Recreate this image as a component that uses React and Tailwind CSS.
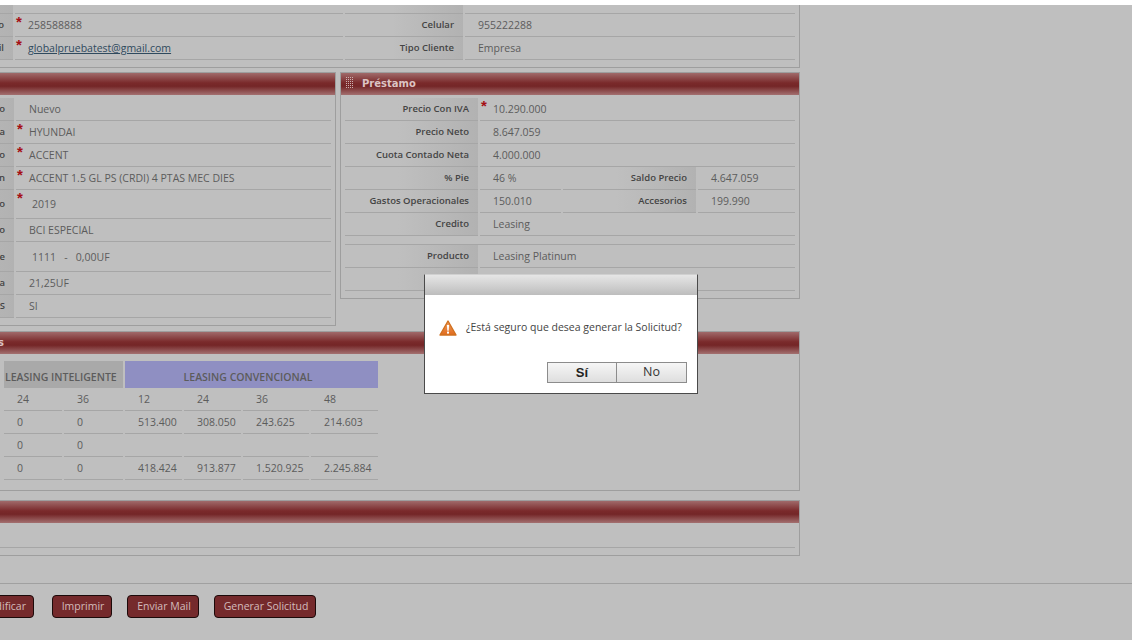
import React from "react";

const LINE = "border-b border-[#a6a6a6]";

function DotGrid() {
  const dots = [];
  for (let y = 0; y < 6; y++) for (let x = 0; x < 4; x++) dots.push([x, y]);
  return (
    <svg width="8" height="12" viewBox="0 0 8 12" className="mr-[8px] shrink-0">
      {dots.map(([x, y]) => (
        <rect key={`${x}-${y}`} x={x * 2} y={y * 2} width="1" height="1" fill="#cdb0b0" />
      ))}
    </svg>
  );
}

function Header({ title, lead }) {
  return (
    <div className="flex h-[22px] items-center bg-[linear-gradient(to_bottom,#a06a6a_0%,#7a2a2b_45%,#742627_60%,#a37070_100%)] pb-[2px] pl-[5px]">
      {title && <DotGrid />}
      {title && <span className="font-['DejaVu_Sans',sans-serif] text-[10px] font-bold text-[#dcc4c4]">{title}</span>}
      {lead && <span className="w-[149px] text-right font-['DejaVu_Sans',sans-serif] text-[10px] font-bold text-[#dcc4c4]">{lead}</span>}
    </div>
  );
}

function Label({ children, className = "" }) {
  return (
    <div className={`flex items-center justify-end bg-[linear-gradient(to_right,#bfbfbf_40%,#b2b2b2)] pr-[9px] pt-[1px] font-['Open_Sans',sans-serif] text-[9.5px] font-semibold text-[#444444] ${LINE} ${className}`}>
      {children}
    </div>
  );
}

function Value({ children, req, pad = 13, link, className = "" }) {
  return (
    <div className={`relative flex items-center pt-[2px] font-['Open_Sans',sans-serif] text-[10.5px] text-[#5c5c5c] ${LINE} ${className}`}>
      {req && <span className="absolute left-[1px] top-0 font-['Liberation_Sans',sans-serif] text-[15px] font-bold leading-[15px] text-[#a50f14]">*</span>}
      <span className={`whitespace-pre ${pad === 13 ? "pl-[13px]" : "pl-[16px]"}`}>
        {link ? <span className="text-[#2f4a5e] underline">{children}</span> : children}
      </span>
    </div>
  );
}

function LeftRow({ label, value, req, h = "h-[23px]", pad }) {
  return (
    <div className={`grid ${h} grid-cols-[164px_1fr] gap-x-[2px]`}>
      <Label>{label}</Label>
      <Value req={req} pad={pad}>{value}</Value>
    </div>
  );
}

function RightRow({ label, value, req, label2, value2, h = "h-[23px]" }) {
  if (label2) {
    return (
      <div className={`grid ${h} grid-cols-[133px_81px_133px_1fr] gap-x-[2px]`}>
        <Label>{label}</Label>
        <Value>{value}</Value>
        <Label>{label2}</Label>
        <Value>{value2}</Value>
      </div>
    );
  }
  return (
    <div className={`grid ${h} grid-cols-[133px_1fr] gap-x-[2px]`}>
      <Label>{label}</Label>
      <Value req={req}>{value}</Value>
    </div>
  );
}

function TopRow({ label, value, req, label2, value2, link, labelClass = "" }) {
  return (
    <div className="grid h-[23px] grid-cols-[163px_328px_118px_1fr] gap-x-[2px]">
      <Label className={labelClass}>{label}</Label>
      <Value req={req} link={link}>{value}</Value>
      <Label className={labelClass}>{label2}</Label>
      <Value>{value2}</Value>
    </div>
  );
}

const tableCols = "grid grid-cols-[58px_59px_57px_57px_66px_67px] gap-x-[2px]";

function TableRow({ cells }) {
  return (
    <div className={`${tableCols} h-[23px]`}>
      {cells.map((cell, i) => (
        <div key={i} className={`flex items-center pl-[13px] pt-[2px] font-['Open_Sans',sans-serif] text-[10.5px] text-[#5c5c5c] ${LINE}`}>
          {cell}
        </div>
      ))}
    </div>
  );
}

function FooterButton({ children, className = "" }) {
  return (
    <button className={`flex h-[23px] items-center justify-center rounded-[4px] border border-[#1c0a0a] bg-[#752a2c] pl-[2px] font-['Open_Sans',sans-serif] text-[10.5px] text-[#d3bcbc] ${className}`}>
      {children}
    </button>
  );
}

function Dialog() {
  return (
    <div className="fixed left-[424px] top-[274px] h-[120px] w-[274px] border border-[#4a4a4a] border-t-[#d0d0d0] bg-white">
      <div className="h-[20px] bg-[linear-gradient(to_bottom,#e6e6e6,#bdbdbd)]" />
      <div className="flex items-center pl-[14px] pt-[25px]">
        <svg width="18" height="16" viewBox="0 0 18 16">
          <defs>
            <linearGradient id="warn" x1="0" y1="0" x2="0" y2="1">
              <stop offset="0" stopColor="#f0a060" />
              <stop offset="1" stopColor="#e06a1c" />
            </linearGradient>
          </defs>
          <path d="M9 1 17 15H1Z" fill="url(#warn)" stroke="#d0701f" strokeWidth="1.4" strokeLinejoin="round" />
          <path d="M7.9 5h2.2l-.4 5.8H8.3Z" fill="#fff" />
          <rect x="8" y="11.6" width="2" height="2" fill="#fff" />
        </svg>
        <span className="ml-[9px] font-['Open_Sans',sans-serif] text-[10.5px] text-[#444444]">¿Está seguro que desea generar la Solicitud?</span>
      </div>
      <div className="mt-[26px] flex justify-end pr-[10px]">
        <button className="h-[21px] w-[70px] border border-[#8c8c8c] bg-[linear-gradient(to_bottom,#f6f6f6,#dedede)] font-['Liberation_Sans',sans-serif] text-[13px] font-bold text-[#222]">Sí</button>
        <button className="h-[21px] w-[70px] border border-l-0 border-[#8c8c8c] bg-[linear-gradient(to_bottom,#f6f6f6,#dedede)] font-['Open_Sans',sans-serif] text-[12.5px] text-[#333]">No</button>
      </div>
    </div>
  );
}

export default function App() {
  return (
    <div className="h-[640px] w-[1132px] overflow-hidden bg-[#bfbfbf]">
      <div className="h-[5px] bg-white" />
      <div className="ml-[-150px] w-[950px]">
        {/* cliente */}
        <div className="border-b border-r border-[#9e9e9e] pb-[7px] pr-[4px]">
          <div className="h-[9px] overflow-hidden">
            <div className="mt-[-14px]">
              <TopRow label="Contacto" value="" label2="Empresa Telefono" value2="" labelClass="pb-[5px]" />
            </div>
          </div>
          <TopRow label="Teléfono" value="258588888" req label2="Celular" value2="955222288" />
          <TopRow label="Email" value="globalpruebatest@gmail.com" req link label2="Tipo Cliente" value2="Empresa" />
        </div>

        {/* vehiculo y prestamo */}
        <div className="mt-[4px] flex items-start gap-x-[4px]">
          <div className="h-[254px] w-[486px] border border-l-0 border-[#9e9e9e]">
            <Header />
            <div className="pr-[4px] pt-[3px]">
              <LeftRow label="Estado" value="Nuevo" />
              <LeftRow label="Marca" value="HYUNDAI" req />
              <LeftRow label="Modelo" value="ACCENT" req />
              <LeftRow label="Versión" value="ACCENT 1.5 GL PS (CRDI) 4 PTAS MEC DIES" req />
              <LeftRow label="Año" value="2019" req h="h-[29px]" pad={16} />
              <LeftRow label="Seguro" value="BCI ESPECIAL" />
              <LeftRow label="Deducible" value={"1111   -   0,00UF"} h="h-[30px]" pad={16} />
              <LeftRow label="Prima" value="21,25UF" />
              <LeftRow label="GPS" value="SI" />
            </div>
          </div>

          <div className="h-[227px] w-[460px] border border-[#9e9e9e]">
            <Header title="Préstamo" />
            <div className="px-[4px] pt-[3px]">
              <RightRow label="Precio Con IVA" value="10.290.000" req />
              <RightRow label="Precio Neto" value="8.647.059" />
              <RightRow label="Cuota Contado Neta" value="4.000.000" />
              <RightRow label="% Pie" value="46 %" label2="Saldo Precio" value2="4.647.059" />
              <RightRow label="Gastos Operacionales" value="150.010" label2="Accesorios" value2="199.990" />
              <RightRow label="Credito" value="Leasing" />
              <div className={`h-[9px] ${LINE}`} />
              <RightRow label="Producto" value="Leasing Platinum" />
              <RightRow label="" value="" />
            </div>
          </div>
        </div>

        {/* simulaciones */}
        <div className="mt-[5px] h-[160px] border border-l-0 border-[#9e9e9e]">
          <Header lead="Simulaciones" />
          <div className="ml-[154px] mt-[7px] w-[374px]">
            <div className="flex h-[27px] gap-x-[2px] font-['Open_Sans',sans-serif] text-[10.5px] font-semibold text-[#5c5c5c]">
              <div className="flex w-[119px] items-center bg-[#a9a9a9] pl-[1px] pt-[6px]">LEASING INTELIGENTE</div>
              <div className="flex w-[253px] items-center justify-center bg-[#8f8fc2] pr-[7px] pt-[6px]">LEASING CONVENCIONAL</div>
            </div>
            <TableRow cells={["24", "36", "12", "24", "36", "48"]} />
            <TableRow cells={["0", "0", "513.400", "308.050", "243.625", "214.603"]} />
            <TableRow cells={["0", "0", "", "", "", ""]} />
            <TableRow cells={["0", "0", "418.424", "913.877", "1.520.925", "2.245.884"]} />
          </div>
        </div>

        {/* observaciones */}
        <div className="mt-[9px] h-[56px] border border-l-0 border-[#9e9e9e]">
          <Header />
          <div className={`mr-[4px] h-[25px] ${LINE}`} />
        </div>
      </div>

      {/* acciones */}
      <div className="mt-[27px] border-t border-[#a0a0a0] pt-[11px]">
        <div className="ml-[-30px] flex gap-x-[15px]">
          <FooterButton className="mr-[3px] w-[64px] justify-end pr-[7px]">Modificar</FooterButton>
          <FooterButton className="w-[60px]">Imprimir</FooterButton>
          <FooterButton className="w-[72px]">Enviar Mail</FooterButton>
          <FooterButton className="w-[102px]">Generar Solicitud</FooterButton>
        </div>
      </div>

      <Dialog />
    </div>
  );
}
